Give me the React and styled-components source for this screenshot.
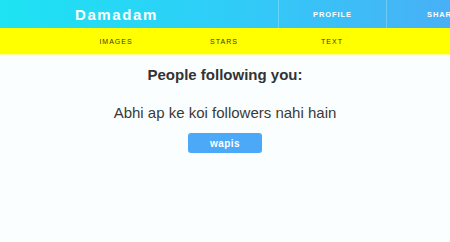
import React from "react";
import styled, { createGlobalStyle } from "styled-components";

const Global = createGlobalStyle`
  html, body {
    margin: 0;
    padding: 0;
    background: #fbfeff;
    font-family: "Liberation Sans", Arial, sans-serif;
    overflow: hidden;
  }
`;

// top blue bar
const TopBar = styled.div`
  display: flex;
  height: 28px;
  background: linear-gradient(to right, #1de3f2 0%, #2fcdf8 50%, #48b0f6 100%);
  white-space: nowrap;
`;

const Logo = styled.div`
  width: 278px;
  flex: none;
  box-sizing: border-box;
  padding-left: 75px;
  display: flex;
  align-items: center;
  color: #fff;
  font-size: 15px;
  font-weight: bold;
  letter-spacing: 1.6px;
`;

const TopLink = styled.div`
  width: 108px;
  flex: none;
  display: flex;
  align-items: center;
  justify-content: ${(p) => (p.$cut ? "flex-start" : "center")};
  padding-left: ${(p) => (p.$cut ? "40px" : "0")};
  box-sizing: border-box;
  border-left: 1px solid rgba(255, 255, 255, 0.25);
  color: #fff;
  font-size: 7.5px;
  font-weight: bold;
  letter-spacing: 0.9px;
`;

// yellow section bar
const SubBar = styled.div`
  display: flex;
  height: 26px;
  padding-left: 62px;
  background: #ffff00;
  border-bottom: 1px solid #fbfb9a;
`;

const SubLink = styled.div`
  width: 108px;
  display: flex;
  align-items: center;
  justify-content: center;
  color: #3a3a1a;
  font-size: 7px;
  letter-spacing: 1px;
`;

const Main = styled.div`
  display: flex;
  flex-direction: column;
  align-items: center;
  padding-top: 11px;
`;

const Heading = styled.h2`
  margin: 0;
  font-size: 15px;
  font-weight: bold;
  color: #333;
`;

const Message = styled.p`
  margin: 21px 0 0;
  font-size: 15px;
  color: #3a3a3a;
`;

const Button = styled.button`
  margin-top: 12px;
  width: 74px;
  height: 20px;
  border: none;
  border-radius: 3px;
  background: #4ca9f7;
  color: #fff;
  font-family: inherit;
  font-size: 10px;
  font-weight: bold;
  letter-spacing: 0.4px;
  cursor: pointer;
`;

export default function App() {
  return (
    <>
      <Global />
      <TopBar>
        <Logo>Damadam</Logo>
        <TopLink>PROFILE</TopLink>
        <TopLink $cut>SHARE</TopLink>
      </TopBar>
      <SubBar>
        <SubLink>IMAGES</SubLink>
        <SubLink>STARS</SubLink>
        <SubLink>TEXT</SubLink>
      </SubBar>
      <Main>
        <Heading>People following you:</Heading>
        <Message>Abhi ap ke koi followers nahi hain</Message>
        <Button>wapis</Button>
      </Main>
    </>
  );
}
